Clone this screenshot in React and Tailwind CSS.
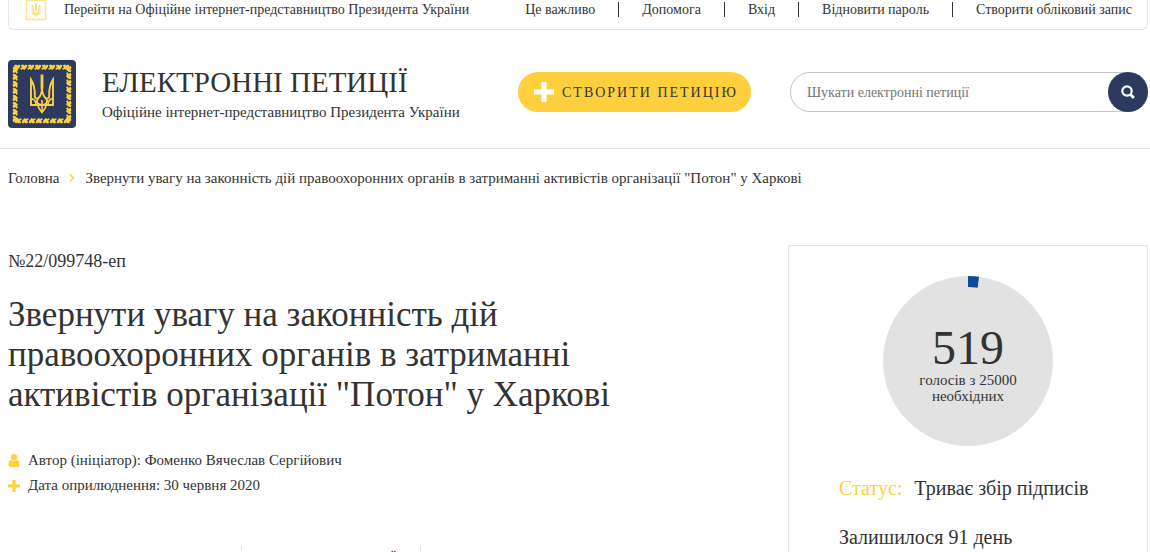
import React from 'react';

const topLinks = ['Це важливо', 'Допомога', 'Вхід', 'Відновити пароль', 'Створити обліковий запис'];

const petition = {
  number: '№22/099748-еп',
  title: 'Звернути увагу на законність дій правоохоронних органів в затриманні активістів організації "Потон" у Харкові',
  author: 'Фоменко Вячеслав Сергійович',
  date: '30 червня 2020',
  votes: 519,
  required: 25000,
  status: 'Триває збір підписів',
  daysLeft: 'Залишилося 91 день',
};

// Leaves on one side of the ornamental frame, turned four times around the centre
const leaves = [0, 1, 2, 3, 4, 5, 6, 7];

function Emblem({ className, background, frame, trident }) {
  return (
    <svg viewBox="0 0 68 68" className={className} aria-hidden="true">
      <rect width="68" height="68" rx="4" fill={background} />
      {[0, 90, 180, 270].map((turn) => (
        <g key={turn} transform={`rotate(${turn} 34 34)`} fill={frame}>
          {leaves.map((n) => (
            <path key={n} d={`M${5.5 + n * 7} 5.5l2.500-1 2 1.200 0.500-1.200 1.800 0.800-0.600 2.200-2.200 2.400-1.800-0.800-1.800 0.800-0.600-1.600 1.800-1z`} />
          ))}
        </g>
      ))}
      <g fill="none" stroke={trident} strokeWidth="1.900">
        <path d="M30 38.500c-2.500 0.500-3.500-1-3.200-3.100 0.200-6-0.800-11-3.800-15.800V45h22V19.600c-3 4.800-4 9.800-3.800 15.800 0.300 2.100-0.700 3.600-3.200 3.100" />
        <path d="M34 15v12c0 6-1 9-4 11.500-2 2.500-1.500 6.500 4 6.500s6-4 4-6.500c-3-2.500-4-5.500-4-11.500" />
        <path d="M23 38.500c3 0.500 5 3 5 6.500M45 38.500c-3 0.500-5 3-5 6.500M30 45c0 3.500 1.800 4.500 4 7.500 2.200-3 4-4 4-7.500M34 40v12" strokeWidth="1.600" />
        <path d="M34 14.500v14" strokeWidth="2.800" />
      </g>
    </svg>
  );
}

function Plus({ className }) {
  return (
    <svg viewBox="0 0 20 20" className={className} aria-hidden="true">
      <path d="M7.400 0h5.200v7.400H20v5.200h-7.400V20H7.400v-7.400H0V7.400h7.400z" fill="currentColor" />
    </svg>
  );
}

function UserIcon({ className }) {
  return (
    <svg viewBox="0 128 1280 1536" className={className} fill="currentColor" aria-hidden="true">
      <path d="M1280 1399q0 109-62.500 187t-150.500 78h-854q-88 0-150.500-78t-62.500-187q0-85 8.500-160.500t31.500-152 58.500-131 94-89 134.500-34.500q131 128 313 128t313-128q76 0 134.500 34.500t94 89 58.500 131 31.500 152 8.500 160.500z" />
      <circle cx="640" cy="512" r="384" />
    </svg>
  );
}

function TopBar() {
  return (
    <div className="ml-2 mr-0.5 flex h-[30px] items-start justify-between rounded-b-md border-x border-b border-[#e2e4e6] pl-[15px] pr-[15px] text-[14px] leading-5">
      <a href="#president" className="flex">
        <span className="mr-4 flex h-[22px] w-6 items-end overflow-hidden">
          <Emblem className="h-6 w-6 shrink-0" background="#fff" frame="#ffdf7d" trident="#ffd03e" />
        </span>
        Перейти на Офіційне інтернет-представництво Президента України
      </a>
      <nav className="flex">
        {topLinks.map((label, i) => (
          <React.Fragment key={label}>
            {i > 0 && <span className="mx-[23px] mt-0.5 h-[15px] w-px bg-[#333]" />}
            <a href="#menu">{label}</a>
          </React.Fragment>
        ))}
      </nav>
    </div>
  );
}

function Header() {
  return (
    <header className="flex items-start border-b border-[#e2e4e6] pt-[30px] pr-0.5 pb-5 pl-2">
      <a href="#home" className="shrink-0" aria-label="Електронні петиції">
        <Emblem className="h-[68px] w-[68px]" background="#2d3a5f" frame="#ffd03e" trident="#ffd03e" />
      </a>
      <div className="ml-[26px] pt-1 whitespace-nowrap">
        <div className="text-[29px] leading-9">ЕЛЕКТРОННІ ПЕТИЦІЇ</div>
        <div className="text-[15px] leading-6">Офіційне інтернет-представництво Президента України</div>
      </div>
      <button type="button" className="mt-3 ml-auto flex h-10 w-[233px] shrink-0 items-center rounded-full bg-[#ffd03e] pl-4 text-[14px] tracking-[2px] whitespace-nowrap">
        <Plus className="mr-2 h-5 w-5 text-white" />
        СТВОРИТИ ПЕТИЦІЮ
      </button>
      <form className="mt-3 ml-[39px] flex h-10 w-[358px] shrink-0 rounded-full border border-[#c3c4d2]">
        <input type="text" aria-label="Шукати електронні петиції" placeholder="Шукати електронні петиції" className="min-w-0 flex-1 rounded-full pl-4 text-[14px] outline-none placeholder:text-[#757575]" />
        <button type="button" aria-label="Шукати" className="-m-px flex h-10 w-10 items-center justify-center rounded-full bg-[#2d3a5f]">
          <svg viewBox="0 0 14 14" className="h-3.5 w-3.5" fill="none" stroke="#fff" strokeWidth="2.200" aria-hidden="true">
            <circle cx="6" cy="6" r="4.700" />
            <path d="M9.300 9.300l3.600 3.600" strokeWidth="2.800" />
          </svg>
        </button>
      </form>
    </header>
  );
}

function VoteCircle({ votes, required }) {
  const angle = (votes / required) * 2 * Math.PI;
  const x = Math.sin(angle);
  const y = Math.cos(angle);
  const sector = `M85 0A85 85 0 0 1 ${85 + 85 * x} ${85 - 85 * y}L${85 + 74 * x} ${85 - 74 * y}A74 74 0 0 0 85 11z`;

  return (
    <div className="mx-auto grid h-[170px] w-[170px]">
      <svg viewBox="0 0 170 170" className="col-start-1 row-start-1" aria-hidden="true">
        <circle cx="85" cy="85" r="85" fill="#e2e2e2" />
        <path d={sector} fill="#0f4799" />
      </svg>
      <div className="col-start-1 row-start-1 pt-12 text-center">
        <div className="text-[48px] leading-12">{votes}</div>
        <div className="text-[15px] leading-4">голосів з {required}<br />необхідних</div>
      </div>
    </div>
  );
}

export default function App() {
  return (
    <div className="h-screen overflow-hidden bg-white font-['Liberation_Serif',serif] text-[#333]">
      <TopBar />
      <Header />

      <nav className="flex items-center pt-[19px] pl-2 text-[15px] leading-5">
        <a href="#home">Головна</a>
        <svg viewBox="0 0 6 8" className="mx-2.5 h-2 w-1.5" fill="none" stroke="#ffd03e" strokeWidth="1.400" aria-hidden="true">
          <path d="M1 0.500L4.500 4L1 7.500" />
        </svg>
        <span>{petition.title}</span>
      </nav>

      <main className="flex items-start justify-between pt-[57px] pr-0.5 pl-2">
        <div className="min-w-0 flex-1 pt-1.5 pr-[100px]">
          <div className="text-[18px] leading-5">{petition.number}</div>
          <h1 className="mt-6 max-w-[640px] text-[35px] leading-10">{petition.title}</h1>

          <div className="mt-[33px] text-[15px] leading-[25px]">
            <div className="flex items-center">
              <UserIcon className="mr-2 h-[13px] w-3 text-[#ffd03e]" />
              Автор (ініціатор): {petition.author}
            </div>
            <div className="flex items-center">
              <Plus className="mr-2 h-3 w-3 text-[#ffd03e]" />
              Дата оприлюднення: {petition.date}
            </div>
          </div>

          <div className="mt-12 flex h-14 pl-[233px]">
            <button type="button" className="flex w-[180px] justify-end border-x border-[#e2e4e6] pt-0.5 pr-6 text-[15px] leading-5">ТЕКСТ ПЕТИЦІЇ</button>
          </div>
        </div>

        <aside className="w-[360px] shrink-0 border border-[#e2e4e6] pt-[30px] pb-10">
          <VoteCircle votes={petition.votes} required={petition.required} />
          <div className="pl-[50px] text-[20px] leading-6">
            <div className="mt-[30px] flex">
              <span className="mr-3 text-[#ffd03e]">Статус:</span>
              {petition.status}
            </div>
            <div className="mt-[25px]">{petition.daysLeft}</div>
          </div>
        </aside>
      </main>
    </div>
  );
}
